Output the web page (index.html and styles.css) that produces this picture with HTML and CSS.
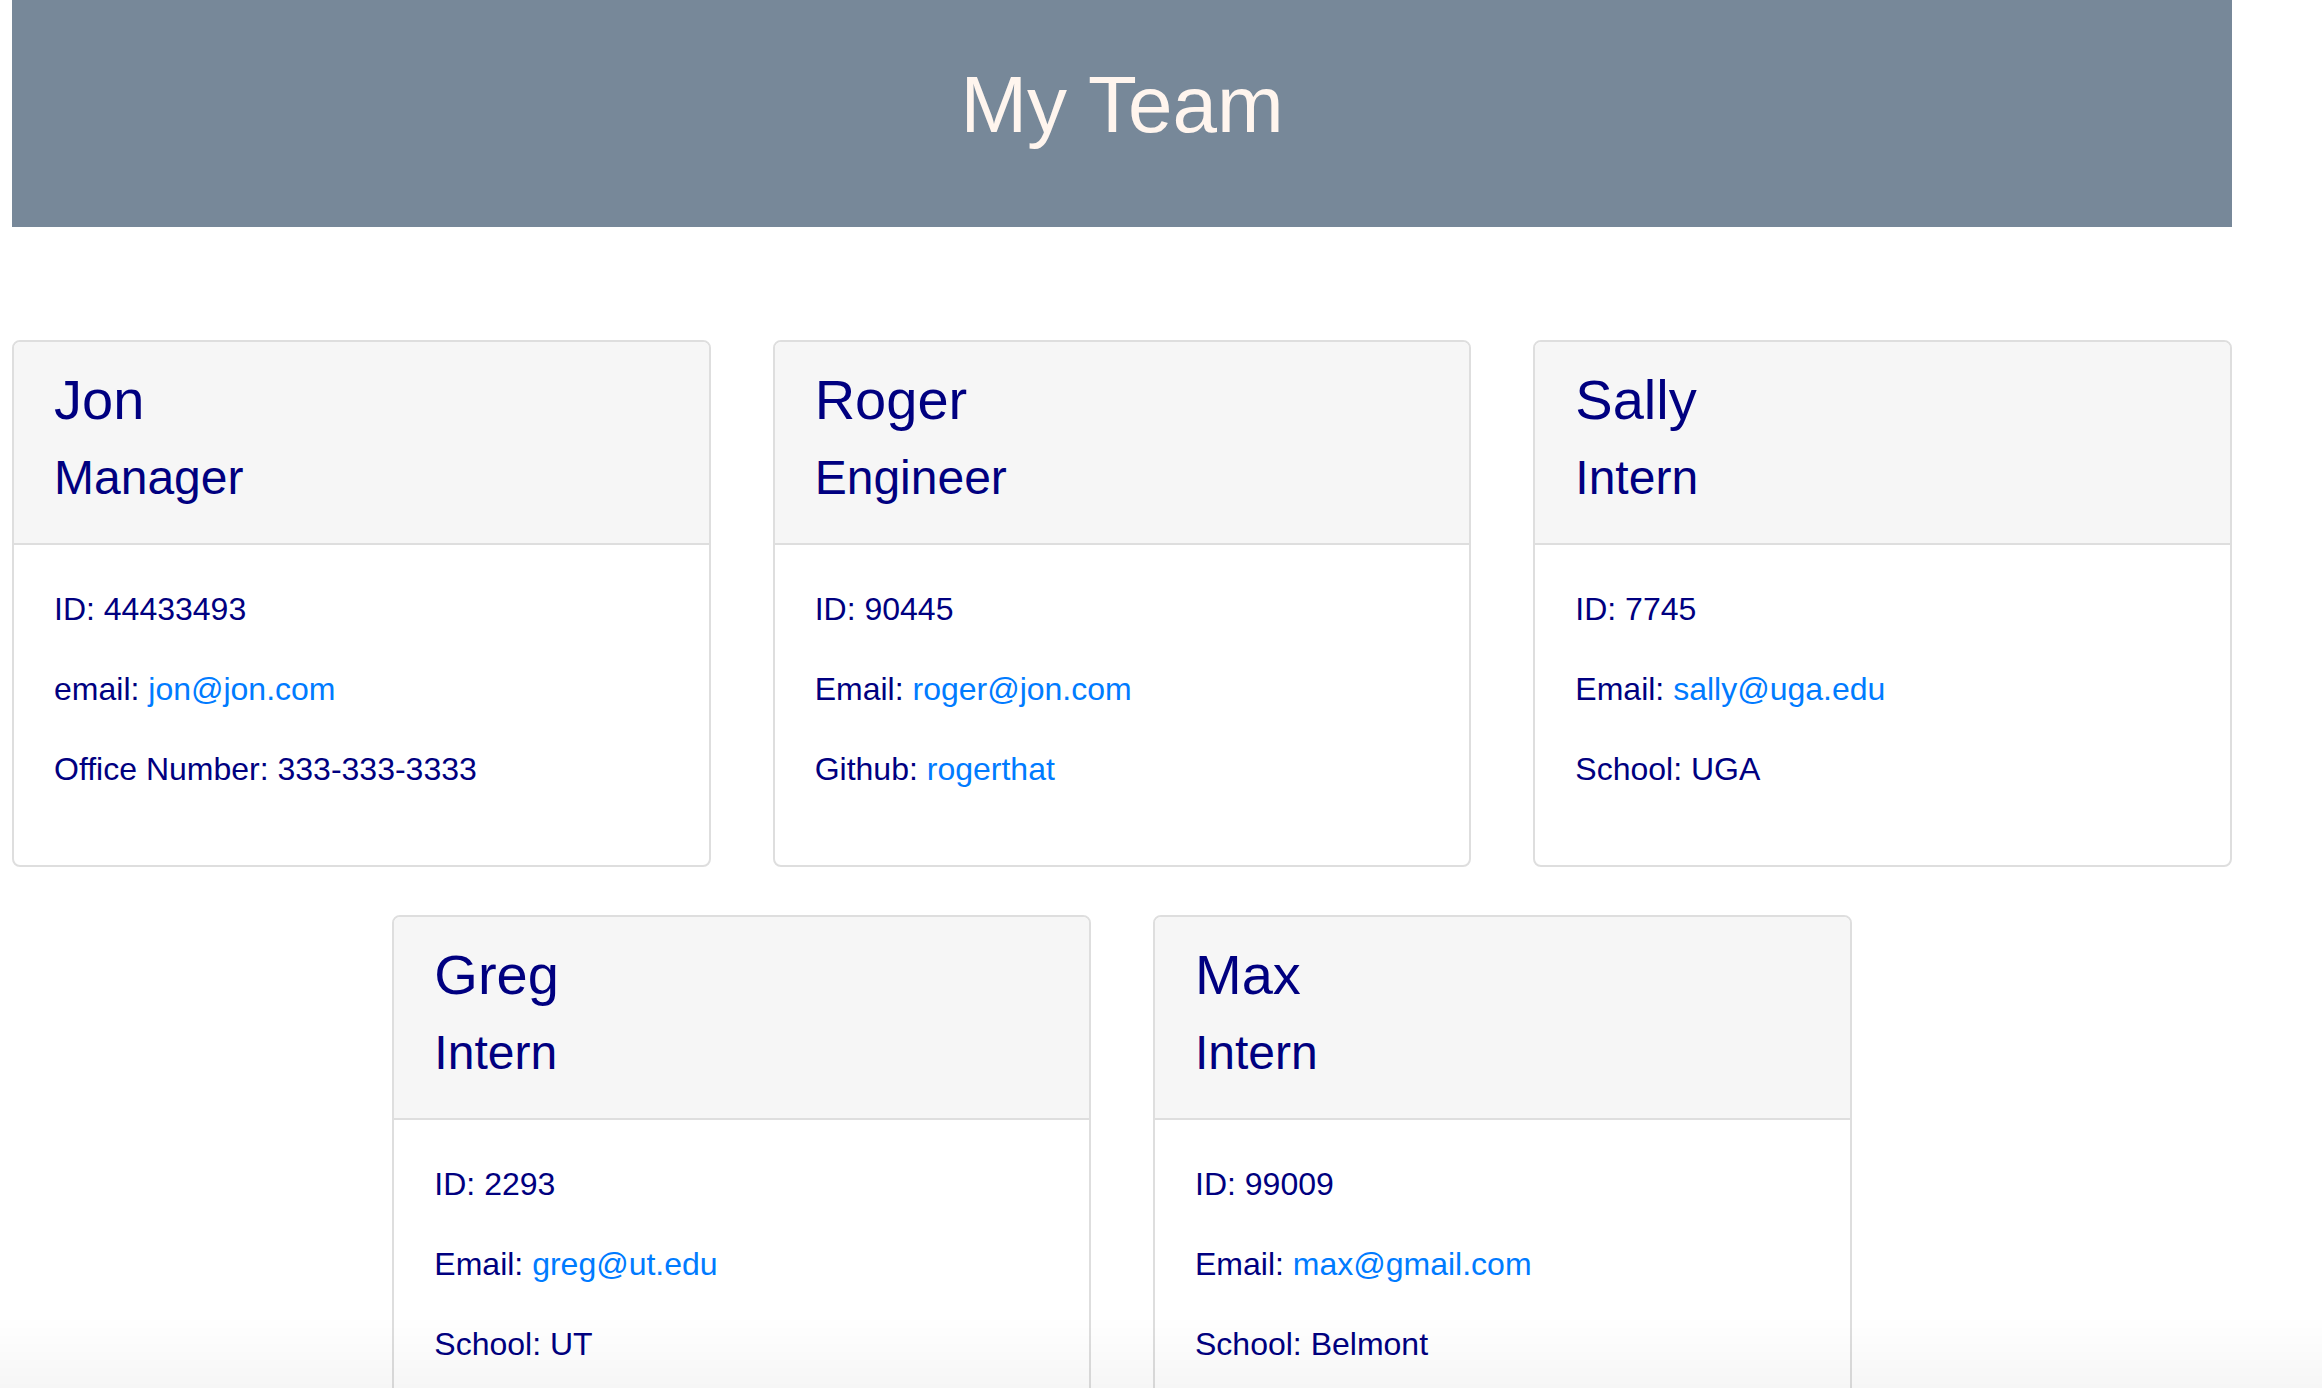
FILE: index.html
```html
<!DOCTYPE html>
<html lang="en">
<head>
<meta charset="utf-8">
<title>My Team</title>
<link rel="stylesheet" href="styles.css">
</head>
<body>
<div class="page">
  <header class="banner">
    <h1 class="banner-title">My Team</h1>
  </header>
  <main class="team">
    <section class="card">
      <div class="card-header">
        <h3 class="card-name">Jon</h3>
        <h4 class="card-role">Manager</h4>
      </div>
      <div class="card-body">
        <p class="card-text">ID: 44433493</p>
        <p class="card-text">email: <a class="link" href="#">jon@jon.com</a></p>
        <p class="card-text">Office Number: 333-333-3333</p>
      </div>
    </section>
    <section class="card">
      <div class="card-header">
        <h3 class="card-name">Roger</h3>
        <h4 class="card-role">Engineer</h4>
      </div>
      <div class="card-body">
        <p class="card-text">ID: 90445</p>
        <p class="card-text">Email: <a class="link" href="#">roger@jon.com</a></p>
        <p class="card-text">Github: <a class="link" href="#">rogerthat</a></p>
      </div>
    </section>
    <section class="card">
      <div class="card-header">
        <h3 class="card-name">Sally</h3>
        <h4 class="card-role">Intern</h4>
      </div>
      <div class="card-body">
        <p class="card-text">ID: 7745</p>
        <p class="card-text">Email: <a class="link" href="#">sally@uga.edu</a></p>
        <p class="card-text">School: UGA</p>
      </div>
    </section>
    <section class="card">
      <div class="card-header">
        <h3 class="card-name">Greg</h3>
        <h4 class="card-role">Intern</h4>
      </div>
      <div class="card-body">
        <p class="card-text">ID: 2293</p>
        <p class="card-text">Email: <a class="link" href="#">greg@ut.edu</a></p>
        <p class="card-text">School: UT</p>
      </div>
    </section>
    <section class="card">
      <div class="card-header">
        <h3 class="card-name">Max</h3>
        <h4 class="card-role">Intern</h4>
      </div>
      <div class="card-body">
        <p class="card-text">ID: 99009</p>
        <p class="card-text">Email: <a class="link" href="#">max@gmail.com</a></p>
        <p class="card-text">School: Belmont</p>
      </div>
    </section>
  </main>
</div>
<div class="bottom-fade"></div>
</body>
</html>
```
FILE: styles.css
```css
html, body {
  margin: 0;
  padding: 0;
  background: #ffffff;
}

body {
  font-family: "Liberation Sans", Arial, Helvetica, sans-serif;
  color: #000080;
}

.page {
  width: 2220px;
  margin-left: 12px;
}

.banner {
  background: #778899;
  padding: 57px 0 74px;
  text-align: center;
}

.banner-title {
  margin: 0;
  font-size: 80px;
  line-height: 96px;
  font-weight: 400;
  color: #fff5ee;
}

.team {
  display: flex;
  flex-wrap: wrap;
  justify-content: center;
  column-gap: 62px;
  row-gap: 48px;
  margin-top: 113px;
}

.card {
  box-sizing: border-box;
  flex: 0 0 calc((100% - 124px) / 3);
  border: 2px solid #dedede;
  border-radius: 8px;
  background: #ffffff;
  overflow: hidden;
}

.card-header {
  background: #f6f6f6;
  padding: 24px 40px;
  border-bottom: 2px solid #dedede;
}

.card-name {
  margin: 0 0 16px;
  font-size: 56px;
  line-height: 67px;
  font-weight: 400;
}

.card-role {
  margin: 0 0 13px;
  font-size: 48px;
  line-height: 57px;
  font-weight: 400;
}

.card-body {
  padding: 40px;
}

.card-text {
  margin: 0 0 32px;
  font-size: 32px;
  line-height: 48px;
}

.link {
  color: #007bff;
  text-decoration: none;
}

.bottom-fade {
  position: fixed;
  left: 0;
  right: 0;
  bottom: 0;
  height: 72px;
  pointer-events: none;
  background: linear-gradient(to bottom, rgba(0, 0, 0, 0), rgba(0, 0, 0, 0.035));
}
```
